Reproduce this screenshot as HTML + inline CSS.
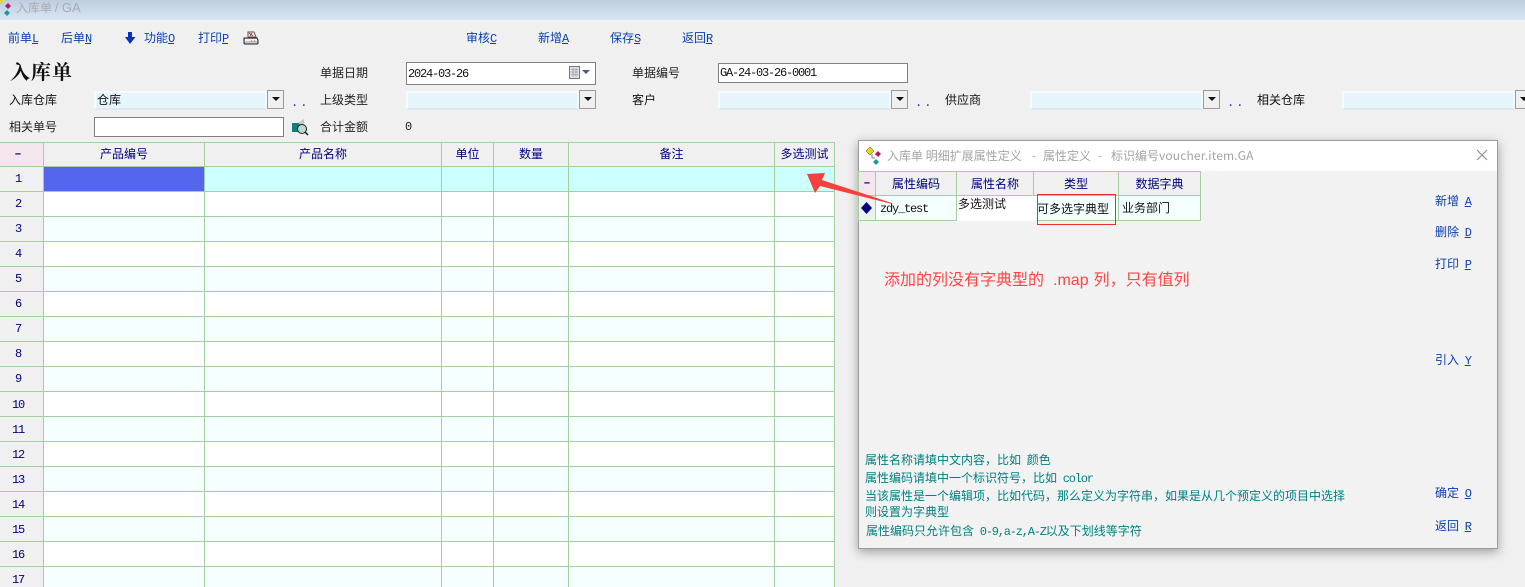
<!DOCTYPE html>
<html lang="zh"><head><meta charset="utf-8"><title>入库单</title>
<style>
html,body{margin:0;padding:0}
body{width:1525px;height:587px;overflow:hidden;position:relative;background:#f0f0f0;font:12px/14px "WenQuanYi Zen Hei","Noto Sans CJK SC",sans-serif;color:#222}
.a{position:absolute;white-space:nowrap}
.t{position:absolute;white-space:nowrap;line-height:14px;height:14px}
.m{font-family:"Liberation Mono",monospace;font-size:12px;letter-spacing:-1.2px}
.b{color:#0a3fb0;word-spacing:3px}
.b u{font-family:"Liberation Mono",monospace;font-size:12px;letter-spacing:-1.2px}
.h{color:#000080;text-align:center;position:absolute;height:14px;line-height:14px;white-space:nowrap}
.c{color:#008080;word-spacing:3px}
.in{position:absolute;background:#fff;border:1px solid #808080;box-sizing:border-box}
.cb{position:absolute;width:173px;height:19px;background:#e6f5fb;box-sizing:border-box;border:2px solid #f4fbfe;border-bottom:2px solid #dde8ee}
.btn{position:absolute;width:17px;height:19px;background:#f0f0f0;border:1px solid #9a9a9a;box-sizing:border-box}
.btn:after{content:"";position:absolute;left:4px;top:6px;border-style:solid;border-width:4px 4px 0;border-color:#111 transparent transparent}
.dd{color:#0a3fb0;letter-spacing:2px;font-family:"Liberation Mono",monospace;font-size:12px}
.n{position:absolute;left:0;width:36px;text-align:center;color:#000080;font:12px/14px "Liberation Mono",monospace;letter-spacing:-1.2px}
.d{position:absolute;color:#000080;font:bold 12px/14px "Liberation Mono",monospace;text-align:center}
</style></head><body>

<div class="a" style="left:0;top:0;width:1525px;height:20px;background:linear-gradient(#bfcedf,#d8e5f4)"></div>
<svg class="a" style="left:0;top:0" width="16" height="16"><path d="M0 0h4l-3 5z" fill="#e8d800"/><path d="M8 3l3 3-3 3-3-3z" fill="#b0186a"/><path d="M7 10l3 3-3 3-3-3z" fill="#1a9a9a"/></svg>
<div class="t" style="left:16px;top:1px;color:#a8adb4">入库单 <span style="font-family:'Liberation Sans';font-size:13px">/ GA</span></div>

<div class="t b" style="left:8px;top:31px">前单<u>L</u></div>
<div class="t b" style="left:61px;top:31px">后单<u>N</u></div>
<svg class="a" style="left:125px;top:32px" width="12" height="13"><path d="M3 0h4v5h3.500L5 12 0 5h3z" fill="#0a30c0"/></svg>
<div class="t b" style="left:144px;top:31px">功能<u>O</u></div>
<div class="t b" style="left:198px;top:31px">打印<u>P</u></div>
<svg class="a" style="left:243px;top:31px" width="16" height="14"><path d="M5 1h6l2 5H5z" fill="#fff" stroke="#555"/><path d="M6 2l4 3M9 2L7 5" stroke="#d02020" fill="none"/><path d="M1 7h13l1 2v3q0 1-1 1H2q-1 0-1-1z" fill="#c8c8c8" stroke="#222"/><path d="M2 8h12v2H2z" fill="#f4f4f4"/><path d="M8 10h1M11 10h1" stroke="#d02020"/></svg>
<div class="t b" style="left:466px;top:31px">审核<u>C</u></div>
<div class="t b" style="left:538px;top:31px">新增<u>A</u></div>
<div class="t b" style="left:610px;top:31px">保存<u>S</u></div>
<div class="t b" style="left:682px;top:31px">返回<u>R</u></div>

<div class="a" style="left:10px;top:60px;font:bold 20px/22px 'Noto Serif CJK SC',serif;letter-spacing:1px;color:#111">入库单</div>

<div class="t" style="left:320px;top:66px">单据日期</div>
<div class="in" style="left:406px;top:62px;width:190px;height:23px"></div>
<div class="t m" style="left:408px;top:67px;color:#111">2024-03-26</div>
<svg class="a" style="left:569px;top:66px" width="21" height="15"><rect x=".5" y=".5" width="10" height="12" fill="#dfe3e6" stroke="#777"/><path d="M2 3.500h7M2 6h7M2 8.500h7M4 2v9M7 2v9" stroke="#aab" fill="none"/><path d="M13 4h8l-4 4z" fill="#4a5a80"/></svg>
<div class="t" style="left:632px;top:66px">单据编号</div>
<div class="in" style="left:718px;top:63px;width:190px;height:20px"></div>
<div class="t m" style="left:720px;top:66px;color:#111">GA-24-03-26-0001</div>

<div class="t" style="left:9px;top:93px;color:#111">入库仓库</div>
<div class="cb" style="left:94px;top:91px"></div><div class="btn" style="left:267px;top:90px"></div>
<div class="t" style="left:97px;top:93px;color:#111">仓库</div>
<div class="t dd" style="left:291px;top:96px">..</div>

<div class="t" style="left:320px;top:93px">上级类型</div>
<div class="cb" style="left:406px;top:91px"></div><div class="btn" style="left:579px;top:90px"></div>

<div class="t" style="left:632px;top:93px;color:#111">客户</div>
<div class="cb" style="left:718px;top:91px"></div><div class="btn" style="left:891px;top:90px"></div>
<div class="t dd" style="left:915px;top:96px">..</div>

<div class="t" style="left:945px;top:93px;color:#111">供应商</div>
<div class="cb" style="left:1030px;top:91px"></div><div class="btn" style="left:1203px;top:90px"></div>
<div class="t dd" style="left:1227px;top:96px">..</div>

<div class="t" style="left:1257px;top:93px;color:#111">相关仓库</div>
<div class="cb" style="left:1342px;top:91px"></div><div class="btn" style="left:1515px;top:90px"></div>

<div class="t" style="left:9px;top:120px">相关单号</div>
<div class="in" style="left:94px;top:117px;width:190px;height:20px"></div>
<svg class="a" style="left:292px;top:119px" width="17" height="17"><path d="M0 4h10v9H0z" fill="#0f7f7f"/><path d="M6 4l6-4v8z" fill="#c4c8c8"/><circle cx="10" cy="10" r="4.500" fill="#bcd8d8" stroke="#222"/><path d="M13 13l3 3" stroke="#111" stroke-width="1.500"/></svg>
<div class="t" style="left:320px;top:120px">合计金额</div>
<div class="t m" style="left:405px;top:120px">0</div>

<svg class="a" style="left:0;top:0" width="836" height="587" shape-rendering="crispEdges">
<rect x="0" y="142" width="43" height="24" fill="#f5e6ee"/>
<rect x="0" y="167" width="43" height="420" fill="#f0f0f0"/>
<rect x="44" y="216" width="790" height="25" fill="#f5ffff"/>
<rect x="44" y="266" width="790" height="25" fill="#f5ffff"/>
<rect x="44" y="316" width="790" height="25" fill="#f5ffff"/>
<rect x="44" y="366" width="790" height="25" fill="#f5ffff"/>
<rect x="44" y="416" width="790" height="25" fill="#f5ffff"/>
<rect x="44" y="466" width="790" height="25" fill="#f5ffff"/>
<rect x="44" y="516" width="790" height="25" fill="#f5ffff"/>
<rect x="44" y="566" width="790" height="21" fill="#f5ffff"/>
<rect x="44" y="191" width="790" height="25" fill="#fff"/>
<rect x="44" y="241" width="790" height="25" fill="#fff"/>
<rect x="44" y="291" width="790" height="25" fill="#fff"/>
<rect x="44" y="341" width="790" height="25" fill="#fff"/>
<rect x="44" y="391" width="790" height="25" fill="#fff"/>
<rect x="44" y="441" width="790" height="25" fill="#fff"/>
<rect x="44" y="491" width="790" height="25" fill="#fff"/>
<rect x="44" y="541" width="790" height="25" fill="#fff"/>
<rect x="44" y="167" width="790" height="24" fill="#ccffff"/>
<rect x="44" y="167" width="160" height="24" fill="#5566ee"/>
<g fill="#a3cf9f">
<rect x="0" y="142" width="835" height="1"/><rect x="0" y="166" width="835" height="1"/><rect x="0" y="191" width="835" height="1"/><rect x="0" y="216" width="835" height="1"/><rect x="0" y="241" width="835" height="1"/><rect x="0" y="266" width="835" height="1"/><rect x="0" y="291" width="835" height="1"/><rect x="0" y="316" width="835" height="1"/><rect x="0" y="341" width="835" height="1"/><rect x="0" y="366" width="835" height="1"/><rect x="0" y="391" width="835" height="1"/><rect x="0" y="416" width="835" height="1"/><rect x="0" y="441" width="835" height="1"/><rect x="0" y="466" width="835" height="1"/><rect x="0" y="491" width="835" height="1"/><rect x="0" y="516" width="835" height="1"/><rect x="0" y="541" width="835" height="1"/><rect x="0" y="566" width="835" height="1"/>
<rect x="43" y="142" width="1" height="445"/><rect x="204" y="142" width="1" height="445"/><rect x="441" y="142" width="1" height="445"/><rect x="493" y="142" width="1" height="445"/><rect x="568" y="142" width="1" height="445"/><rect x="774" y="142" width="1" height="445"/><rect x="834" y="142" width="1" height="445"/>
</g></svg>

<div class="d" style="left:0;top:147px;width:36px">–</div>
<div class="h" style="left:44px;top:147px;width:160px">产品编号</div>
<div class="h" style="left:205px;top:147px;width:236px">产品名称</div>
<div class="h" style="left:442px;top:147px;width:51px">单位</div>
<div class="h" style="left:494px;top:147px;width:74px">数量</div>
<div class="h" style="left:569px;top:147px;width:205px">备注</div>
<div class="h" style="left:775px;top:147px;width:59px">多选测试</div>

<div class="n" style="top:172px">1</div><div class="n" style="top:197px">2</div><div class="n" style="top:222px">3</div><div class="n" style="top:247px">4</div><div class="n" style="top:272px">5</div><div class="n" style="top:297px">6</div><div class="n" style="top:322px">7</div><div class="n" style="top:347px">8</div><div class="n" style="top:372px">9</div><div class="n" style="top:398px">10</div><div class="n" style="top:423px">11</div><div class="n" style="top:448px">12</div><div class="n" style="top:473px">13</div><div class="n" style="top:498px">14</div><div class="n" style="top:523px">15</div><div class="n" style="top:548px">16</div><div class="n" style="top:573px">17</div>

<!-- dialog -->
<div class="a" style="left:858px;top:140px;width:640px;height:409px;background:#f2f2f2;border:1px solid #9c9c9c;box-sizing:border-box;box-shadow:0 3px 10px rgba(0,0,0,.35)"></div>
<div class="a" style="left:859px;top:141px;width:638px;height:30px;background:#fff"></div>
<svg class="a" style="left:864px;top:146px" width="20" height="20"><path d="M6 1l4 4-4 4-4-4z" fill="#e8d800" stroke="#444" stroke-width=".5"/><path d="M14 5l3 3-3 3-3-3z" fill="#b0186a"/><path d="M12 13l3 3-3 3-3-3z" fill="#1a9a9a"/><path d="M8 8v4h3M11 9l1-1" stroke="#888" fill="none"/></svg>
<div class="t" style="left:887px;top:149px;color:#a4a4a4">入库单 明细扩展属性定义</div>
<div class="t" style="left:1032px;top:149px;color:#a4a4a4">-</div>
<div class="t" style="left:1043px;top:149px;color:#a4a4a4">属性定义</div>
<div class="t" style="left:1098px;top:149px;color:#a4a4a4">-</div>
<div class="t" style="left:1111px;top:149px;color:#a4a4a4">标识编号<span style="letter-spacing:.15px">voucher.item.GA</span></div>
<svg class="a" style="left:1476px;top:149px" width="12" height="12"><path d="M1 1l10 10M11 1L1 11" stroke="#8a8a8a" fill="none"/></svg>

<svg class="a" style="left:858px;top:171px" width="345" height="55" shape-rendering="crispEdges">
<rect x="0" y="0" width="18" height="24" fill="#f5e6ee"/>
<rect x="18" y="0" width="324" height="24" fill="#f0f0f0"/>
<rect x="0" y="25" width="18" height="24" fill="#f0f0f0"/>
<rect x="18" y="25" width="324" height="24" fill="#f5ffff"/>
<rect x="99" y="25" width="77" height="25" fill="#fff"/>
<g fill="#a3cf9f">
<rect x="0" y="0" width="343" height="1"/><rect x="0" y="24" width="343" height="1"/>
<rect x="0" y="49" width="99" height="1"/><rect x="180" y="49" width="163" height="1"/>
<rect x="0" y="0" width="1" height="50"/><rect x="17" y="0" width="1" height="50"/><rect x="98" y="0" width="1" height="50"/><rect x="175" y="0" width="1" height="25"/><rect x="260" y="0" width="1" height="50"/><rect x="342" y="0" width="1" height="50"/>
</g>
</svg>
<div class="d" style="left:859px;top:176px;width:16px">–</div>
<div class="h" style="left:876px;top:177px;width:80px">属性编码</div>
<div class="h" style="left:957px;top:177px;width:76px">属性名称</div>
<div class="h" style="left:1034px;top:177px;width:84px">类型</div>
<div class="h" style="left:1119px;top:177px;width:81px">数据字典</div>
<svg class="a" style="left:860px;top:201px" width="13" height="14"><path d="M6.500 1l5.500 6-5.500 6L1 7z" fill="#000080"/></svg>
<div class="t m" style="left:880px;top:202px;color:#111">zdy_test</div>
<div class="t" style="left:958px;top:197px;color:#111">多选测试</div>
<div class="t" style="left:1037px;top:202px;color:#111">可多选字典型</div>
<div class="t" style="left:1122px;top:201px;color:#111">业务部门</div>
<div class="a" style="left:1037px;top:194px;width:79px;height:31px;border:1px solid #e83030;box-sizing:border-box"></div>

<svg class="a" style="left:800px;top:165px" width="100" height="50"><path d="M7 9l18-1-3 7 70 23 0 1-72-18-5 7z" fill="#f6403c"/></svg>

<div class="t" style="left:884px;top:270px;font-size:16px;line-height:16px;height:16px;color:#ff4444">添加的列没有字典型的<span style="font-family:'Liberation Sans';margin-left:9px">.map</span><span style="margin-left:5px">列，只有值列</span></div>

<div class="t b" style="left:1435px;top:194px">新增 <u>A</u></div>
<div class="t b" style="left:1435px;top:225px">删除 <u>D</u></div>
<div class="t b" style="left:1435px;top:257px">打印 <u>P</u></div>
<div class="t b" style="left:1435px;top:353px">引入 <u>Y</u></div>
<div class="t b" style="left:1435px;top:486px">确定 <u>O</u></div>
<div class="t b" style="left:1435px;top:519px">返回 <u>R</u></div>

<div class="t c" style="left:865px;top:453px">属性名称请填中文内容，比如 颜色</div>
<div class="t c" style="left:865px;top:471px">属性编码请填中一个标识符号，比如 <span class="m">color</span></div>
<div class="t c" style="left:865px;top:489px">当该属性是一个编辑项，比如代码，那么定义为字符串，如果是从几个预定义的项目中选择</div>
<div class="t c" style="left:865px;top:505px">则设置为字典型</div>
<div class="t c" style="left:866px;top:524px">属性编码只允许包含 <span class="m">0-9,a-z,A-Z</span>以及下划线等字符</div>

</body></html>
